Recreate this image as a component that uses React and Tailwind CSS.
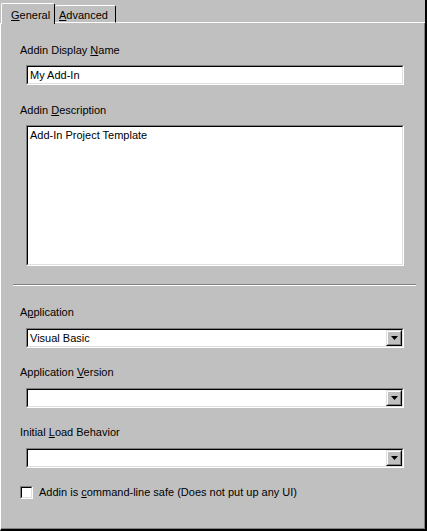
import React from 'react';

const font = { fontFamily: '"Liberation Sans", Arial, sans-serif' };

const Sunken = ({ className = '', children }) => (
  <div className={`border-t border-l border-[#808080] border-b border-r border-b-white border-r-white ${className}`}>
    <div className="h-full border-t border-l border-black border-b border-r border-b-[#dfdfdf] border-r-[#dfdfdf] bg-white">
      {children}
    </div>
  </div>
);

const Label = ({ before, u, after, className = '' }) => (
  <div className={`ml-[19px] h-[13px] leading-[13px] text-[11px] text-black ${className}`}>
    {before}
    <span className="underline underline-offset-1">{u}</span>
    {after}
  </div>
);

const Arrow = () => (
  <div className="w-[16px] h-full bg-[#c0c0c0] border-t border-l border-[#dfdfdf] border-b border-r border-b-black border-r-black">
    <div className="w-full h-full border-t border-l border-white border-b border-r border-b-[#808080] border-r-[#808080] flex items-center justify-center">
      <svg width="7" height="4" viewBox="0 0 7 4">
        <path d="M0 0h7L3.5 4z" fill="#000" />
      </svg>
    </div>
  </div>
);

const Combo = ({ value, className = '' }) => (
  <Sunken className={`ml-[25px] w-[378px] h-[20px] ${className}`}>
    <div className="flex h-full items-stretch">
      <div className="flex-1 pl-[2px] text-[11px] leading-[16px] text-black">{value}</div>
      <Arrow />
    </div>
  </Sunken>
);

export default function App() {
  return (
    <div className="w-[427px] h-[531px] bg-[#c0c0c0] flex flex-col" style={font}>
      {/* tabs */}
      <div className="h-[23px] flex items-end relative z-10 border-r-2 border-r-black">
        <div className="h-[21px] w-[54px] ml-[1px] -mb-[1px] bg-[#c0c0c0] border-t border-l border-white border-r border-r-black rounded-t-[2px] text-[11px] text-black flex items-start pl-[9px] pt-[3px]">
          <span className="underline underline-offset-1">G</span>eneral
        </div>
        <div className="h-[18px] w-[61px] bg-[#c0c0c0] border-t border-white border-r border-r-black rounded-t-[2px] text-[11px] text-black pl-[4px] pt-[1px] border-b border-b-white">
          <span className="underline underline-offset-1">A</span>dvanced
        </div>
        <div className="flex-1 h-[1px] bg-white" />
      </div>
      {/* panel */}
      <div className="flex-1 border-l border-white border-r-2 border-r-black border-b-2 border-b-black">
        <div className="h-full border-r border-r-[#808080] border-b border-b-[#808080] flex flex-col">
          <Label before="Addin Display " u="N" after="ame" className="mt-[21px]" />
          <Sunken className="ml-[25px] w-[378px] h-[20px] mt-[8px]">
            <div className="pl-[2px] text-[11px] leading-[16px] text-black">My Add-In</div>
          </Sunken>
          <Label before="Addin " u="D" after="escription" className="mt-[19px]" />
          <Sunken className="ml-[25px] w-[378px] h-[141px] mt-[8px]">
            <div className="pl-[2px] pt-[2px] text-[11px] leading-[13px] text-black">Add-In Project Template</div>
          </Sunken>
          <div className="ml-[12px] w-[403px] mt-[18px] border-t border-[#808080] border-b border-b-white" />
          <Label before="A" u="p" after="plication" className="mt-[20px]" />
          <Combo value="Visual Basic" className="mt-[9px]" />
          <Label before="Application " u="V" after="ersion" className="mt-[18px]" />
          <Combo value="" className="mt-[9px]" />
          <Label before="Initial " u="L" after="oad Behavior" className="mt-[18px]" />
          <Combo value="" className="mt-[9px]" />
          <div className="flex items-center mt-[18px] ml-[19px]">
            <Sunken className="w-[13px] h-[13px]" />
            <span className="ml-[6px] text-[11px] leading-[13px] text-black">
              Addin is <span className="underline underline-offset-1">c</span>ommand-line safe (Does not put up any UI)
            </span>
          </div>
        </div>
      </div>
    </div>
  );
}
